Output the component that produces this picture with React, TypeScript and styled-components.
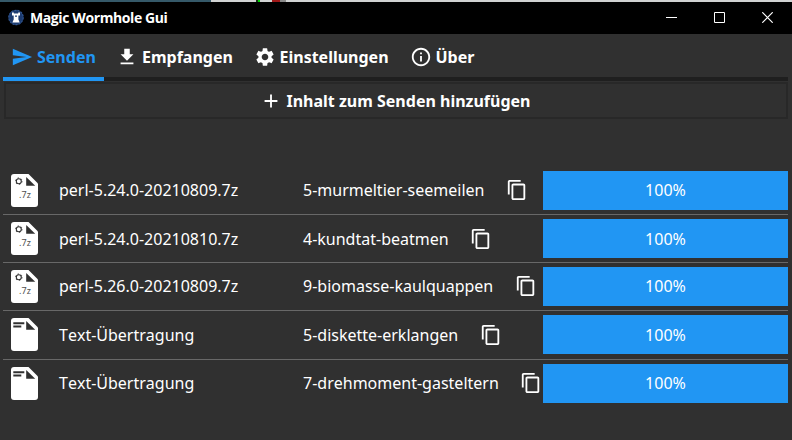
import React from "react";
import styled, { createGlobalStyle } from "styled-components";
import { MdSend, MdFileDownload, MdSettings, MdInfoOutline, MdAdd, MdContentCopy } from "react-icons/md";

const GlobalStyle = createGlobalStyle`
  * { box-sizing: border-box; }
  body { margin: 0; background: #303030; overflow: hidden; }
`;

const Window = styled.main`
  width: 792px;
  height: 440px;
  display: flex;
  flex-direction: column;
  background: #303030;
  color: #fff;
  font-family: "Noto Sans", "Open Sans", sans-serif;
  font-size: 16px;
  font-kerning: none;
  line-height: 22px;
  white-space: nowrap;
`;

const Backdrop = styled.div`
  height: 2px;
  flex: none;
  background: linear-gradient(90deg,
    #355969 0 211px, #d0d2d2 211px 256px, #183018 256px 258px, #00d800 258px 260px,
    #d0d2d2 260px 272px, #a01818 272px 280px, #888 280px 286px, #d0d2d2 286px);
`;

const TitleBar = styled.header`
  height: 32px;
  flex: none;
  display: flex;
  align-items: center;
  background: #000;
  padding-left: 8px;
`;

const Title = styled.span`
  margin-left: 6px;
  flex: 1;
  font-family: "Open Sans", sans-serif;
  font-weight: 700;
  font-size: 14px;
  letter-spacing: -0.4px;
`;

const WindowButton = styled.span`
  width: 48px;
  height: 32px;
  padding: 0 2px 2px 0;
  display: flex;
  align-items: center;
  justify-content: center;
`;

const Tabs = styled.nav`
  height: 47px;
  flex: none;
  margin: 0 4px 0 3px;
  display: flex;
  gap: 4px;
  border-bottom: 4px solid #1f1f1f;
`;

const Tab = styled.span<{ $width: number; $active?: boolean }>`
  width: ${(p) => p.$width}px;
  height: 47px;
  padding: 3px 0 0 8px;
  display: flex;
  align-items: center;
  gap: 4px;
  font-weight: 700;
  color: ${(p) => (p.$active ? "#2196f3" : "#fff")};
  border-bottom: 4px solid ${(p) => (p.$active ? "#2196f3" : "transparent")};
  svg { flex: none; }
`;

const AddButton = styled.div`
  height: 37px;
  flex: none;
  margin: 1px 4px 0;
  padding-right: 1px;
  border: 2px solid #282828;
  display: flex;
  align-items: center;
  justify-content: center;
  gap: 4px;
  font-weight: 700;
`;

const List = styled.section`
  margin: 48px 4px 0 3px;
`;

const Row = styled.div<{ $height: number }>`
  height: ${(p) => p.$height}px;
  display: grid;
  grid-template-columns: 56px 244px 240px 245px;
  align-items: start;
  padding-top: 4px;
  & + & { border-top: 1px solid #686868; }
`;

const Cell = styled.div<{ $raised?: boolean }>`
  height: 39px;
  padding-bottom: ${(p) => (p.$raised ? 2 : 0)}px;
  display: flex;
  align-items: center;
`;

const IconCell = styled(Cell)`
  padding-left: 8px;
`;

const Code = styled(Cell)`
  gap: 21.5px;
  svg { flex: none; }
`;

const Progress = styled(Cell)`
  justify-content: center;
  background: #2196f3;
`;

function Logo() {
  return (
    <svg width="16" height="18" viewBox="0 0 16 18">
      <circle cx="8" cy="8.5" r="7.4" fill="#1c3b70" />
      <circle cx="8" cy="8.5" r="7.2" fill="none" stroke="#315690" strokeWidth="1.2" strokeDasharray="2.2 1" />
      <path d="M4 3.5h1.8v1h4.4v-1H12v3h-1.6v4l1.3 3H4.4l1.3-3v-4H4z" fill="#fff" />
      <path d="M7 6.5h2v1.3H7z" fill="#1c3b70" />
    </svg>
  );
}

function FileIcon({ archive }: { archive?: boolean }) {
  return (
    <svg width="27" height="33" viewBox="0 0 27 33">
      <path d="M3 0h14.5L27 9.5V30a3 3 0 0 1-3 3H3a3 3 0 0 1-3-3V3a3 3 0 0 1 3-3z" fill="#fff" />
      <path d="M15.2 3v8.8h9z" fill="#303030" />
      {archive ? (
        <>
          <circle cx="7.8" cy="7.2" r="2.5" fill="none" stroke="#303030" strokeWidth="1.1" />
          <circle cx="7.8" cy="7.2" r="3.3" fill="none" stroke="#303030" strokeWidth="0.8" strokeDasharray="1.4 2.06" />
          <text x="14" y="24.2" textAnchor="middle" fontSize="9" fill="#505050" fontFamily="Noto Sans, sans-serif">.7z</text>
        </>
      ) : (
        <path d="M2.3 4.3h11v2h-11zM2.3 7.5h8v2h-8z" fill="#303030" />
      )}
    </svg>
  );
}

const transfers = [
  { name: "perl-5.24.0-20210809.7z", code: "5-murmeltier-seemeilen", archive: true, height: 47, raised: true },
  { name: "perl-5.24.0-20210810.7z", code: "4-kundtat-beatmen", archive: true, height: 48, raised: false },
  { name: "perl-5.26.0-20210809.7z", code: "9-biomasse-kaulquappen", archive: true, height: 48, raised: true },
  { name: "Text-Übertragung", code: "5-diskette-erklangen", archive: false, height: 49, raised: false },
  { name: "Text-Übertragung", code: "7-drehmoment-gasteltern", archive: false, height: 48, raised: true },
];

export default function App() {
  return (
    <>
      <GlobalStyle />
      <Window>
        <Backdrop />
        <TitleBar>
          <Logo />
          <Title>Magic Wormhole Gui</Title>
          <WindowButton>
            <svg width="11" height="11"><path d="M0 5.5h11" stroke="#fff" /></svg>
          </WindowButton>
          <WindowButton>
            <svg width="11" height="11"><path d="M.5.5h10v10H.5z" fill="none" stroke="#fff" /></svg>
          </WindowButton>
          <WindowButton>
            <svg width="11" height="11"><path d="M.3.3l10.4 10.4M10.7.3L.3 10.7" stroke="#fff" strokeWidth="1.2" /></svg>
          </WindowButton>
        </TitleBar>
        <Tabs>
          <Tab $width={101} $active><MdSend size={22} />Senden</Tab>
          <Tab $width={133.5}><MdFileDownload size={22} />Empfangen</Tab>
          <Tab $width={152}><MdSettings size={22} />Einstellungen</Tab>
          <Tab $width={90}><MdInfoOutline size={22} />Über</Tab>
        </Tabs>
        <AddButton><MdAdd size={22} />Inhalt zum Senden hinzufügen</AddButton>
        <List>
          {transfers.map((t) => (
            <Row key={t.code} $height={t.height}>
              <IconCell><FileIcon archive={t.archive} /></IconCell>
              <Cell $raised={t.raised}>{t.name}</Cell>
              <Code $raised={t.raised}>{t.code}<MdContentCopy size={22} /></Code>
              <Progress $raised={t.raised}>100%</Progress>
            </Row>
          ))}
        </List>
      </Window>
    </>
  );
}
